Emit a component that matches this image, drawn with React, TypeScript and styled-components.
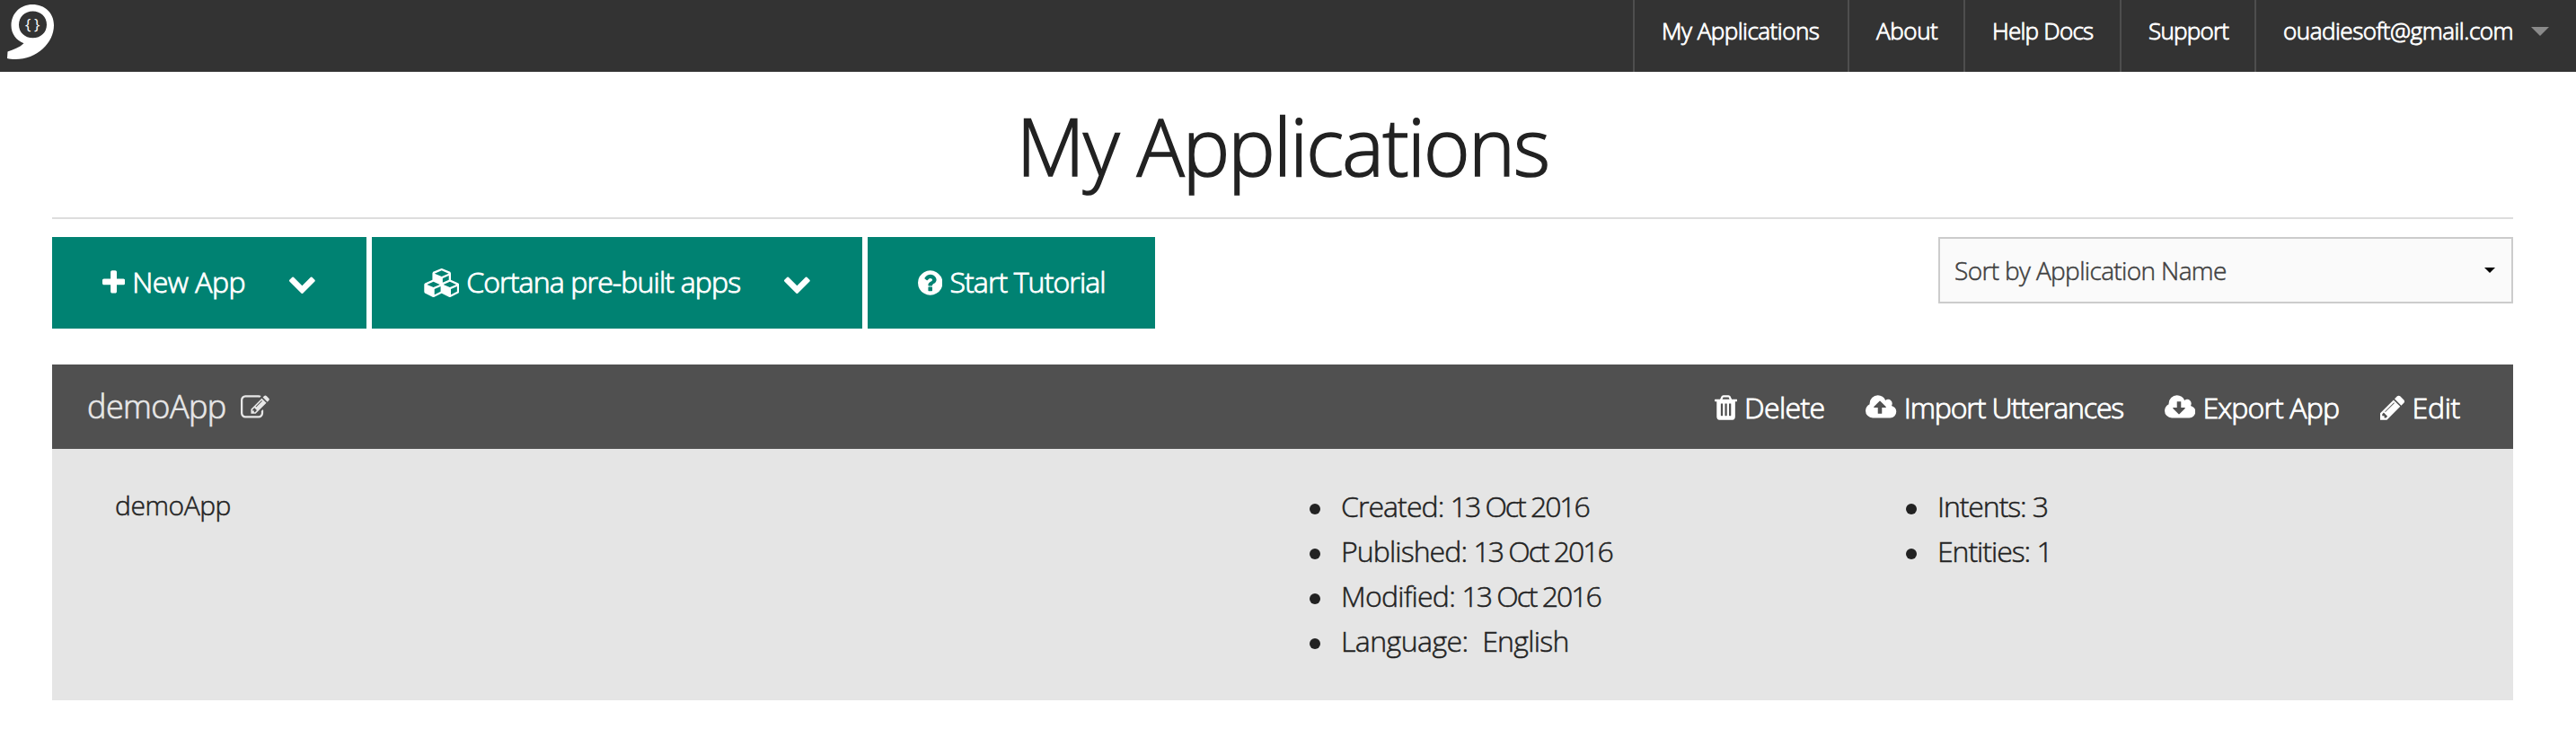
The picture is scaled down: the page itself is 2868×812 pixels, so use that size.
import React from 'react';
import styled, { createGlobalStyle } from 'styled-components';

const GlobalStyle = createGlobalStyle`
  * { box-sizing: border-box; }
  body { margin: 0; background: #fff; }
  body, button, select {
    font-family: 'Open Sans', 'Noto Sans', sans-serif;
    font-weight: 300;
    color: #222;
    -webkit-text-stroke: 0.5px currentColor;
  }
  h1, h2, p, ul { margin: 0; padding: 0; font-weight: 300; }
`;

/* ---------- icons ---------- */

const Glyph = styled.svg`
  display: block;
  flex: none;
  height: 32px;
  margin-top: 2px;
  fill: currentColor;
`;

const cloud =
  'zm640 288q0 159-112.5 271.5t-271.5 112.5h-1088q-185 0-316.5-131.5t-131.5-316.5q0-130 70-240t188-165q-2-30-2-43 0-212 150-362t362-150q156 0 285.5 87t188.5 231q71-62 166-62 106 0 181 75t75 181q0 76-41 138 130 31 213.5 135.5t83.5 238.5z';

const icons = {
  plus: {
    x: 192, w: 1408,
    d: 'M1600 736v192q0 40-28 68t-68 28h-416v416q0 40-28 68t-68 28h-192q-40 0-68-28t-28-68v-416h-416q-40 0-68-28t-28-68v-192q0-40 28-68t68-28h416v-416q0-40 28-68t68-28h192q40 0 68 28t28 68v416h416q40 0 68 28t28 68z',
  },
  chevron: {
    x: 90, w: 1612,
    d: 'M1683 808l-742 741q-19 19-45 19t-45-19l-742-741q-19-19-19-45.500t19-45.500l166-165q19-19 45-19t45 19l531 531 531-531q19-19 45-19t45 19l166 165q19 19 19 45.500t-19 45.500z',
  },
  cubes: {
    x: -128, w: 2304,
    d: 'M640 1632l384-192v-314l-384 164v342zm-64-454l404-173-404-173-404 173zm1088 454l384-192v-314l-384 164v342zm-64-454l404-173-404-173-404 173zm-448-293l384-165v-266l-384 164v267zm-64-379l441-189-441-189-441 189zm1088 518v416q0 36-19 67t-52 47l-448 224q-25 14-57 14t-57-14l-448-224q-5-2-7-4-2 2-7 4l-448 224q-25 14-57 14t-57-14l-448-224q-33-16-52-47t-19-67v-416q0-38 21.500-70t56.500-48l434-186v-400q0-38 21.500-70t56.500-48l448-192q23-10 50-10t50 10l448 192q35 16 56.500 48t21.500 70v400l434 186q36 16 57 48t21 70z',
  },
  question: {
    x: 128, w: 1536,
    d: 'M1024 1376v-192q0-14-9-23t-23-9h-192q-14 0-23 9t-9 23v192q0 14 9 23t23 9h192q14 0 23-9t9-23zm256-672q0-88-55.500-163t-138.500-116-170-41q-243 0-371 213-15 24 8 42l132 100q7 6 19 6 16 0 25-12 53-68 86-92 34-24 86-24 48 0 85.500 26t37.500 59q0 38-20 61t-68 45q-63 28-115.500 86.500t-52.500 125.500v36q0 14 9 23t23 9h192q14 0 23-9t9-23q0-19 21.500-49.500t54.500-49.500q32-18 49-28.500t46-35 44.500-48 28-60.500 12.500-81zm384 192q0 209-103 385.500t-279.500 279.500-385.500 103-385.500-103-279.500-279.500-103-385.500 103-385.500 279.500-279.500 385.500-103 385.500 103 279.500 279.500 103 385.500z',
  },
  compose: {
    x: 0, w: 1792,
    d: 'M888 1184l116-116-152-152-116 116v56h96v96h56zm440-720q-16-16-33 1l-350 350q-17 17-1 33t33-1l350-350q17-17 1-33zm80 594v190q0 119-84.500 203.500t-203.500 84.500h-832q-119 0-203.500-84.500t-84.500-203.500v-832q0-119 84.500-203.500t203.500-84.500h832q63 0 117 25 15 7 18 23 3 17-9 29l-49 49q-14 14-32 8-23-6-45-6h-832q-66 0-113 47t-47 113v832q0 66 47 113t113 47h832q66 0 113-47t47-113v-126q0-13 9-22l64-64q15-15 35-7t20 29zm-96-738l288 288-672 672h-288v-288zm444 132l-92 92-288-288 92-92q28-28 68-28t68 28l152 152q28 28 28 68t-28 68z',
  },
  trash: {
    x: 192, w: 1408,
    d: 'M704 1376v-704q0-14-9-23t-23-9h-64q-14 0-23 9t-9 23v704q0 14 9 23t23 9h64q14 0 23-9t9-23zm256 0v-704q0-14-9-23t-23-9h-64q-14 0-23 9t-9 23v704q0 14 9 23t23 9h64q14 0 23-9t9-23zm256 0v-704q0-14-9-23t-23-9h-64q-14 0-23 9t-9 23v704q0 14 9 23t23 9h64q14 0 23-9t9-23zm-544-992h448l-48-117q-7-9-17-11h-317q-10 2-17 11zm928 32v64q0 14-9 23t-23 9h-96v948q0 83-47 143.500t-113 60.500h-832q-66 0-113-58.500t-47-141.500v-952h-96q-14 0-23-9t-9-23v-64q0-14 9-23t23-9h309l70-167q15-37 54-63t79-26h320q40 0 79 26t54 63l70 167h309q14 0 23 9t9 23z',
  },
  upload: {
    x: -64, w: 1920,
    d: 'M1216 864q0-14-9-23l-352-352q-9-9-23-9t-23 9l-351 351q-10 12-10 24 0 14 9 23t23 9h224v352q0 13 9.500 22.500t22.500 9.500h192q13 0 22.500-9.500t9.500-22.500v-352h224q13 0 22.500-9.500t9.500-22.500' + cloud,
  },
  download: {
    x: -64, w: 1920,
    d: 'M1216 928q0-14-9-23t-23-9h-224v-352q0-13-9.500-22.500t-22.500-9.500h-192q-13 0-22.500 9.500t-9.500 22.500v352h-224q-13 0-22.500 9.500t-9.500 22.500q0 14 9 23l352 352q9 9 23 9t23-9l351-351q10-12 10-24' + cloud.replace('zm640 288', 'zm640 224'),
  },
  pencil: {
    x: 128, w: 1536,
    d: 'M491 1536l91-91-235-235-91 91v107h128v128h107zm523-928q0-22-22-22-10 0-17 7l-542 542q-7 7-7 17 0 22 22 22 10 0 17-7l542-542q7-7 7-17zm-54-192l416 416-832 832h-416v-416zm683 96q0 53-37 90l-166 166-416-416 166-165q36-38 90-38 53 0 91 38l235 234q37 39 37 91z',
  },
};

type IconName = keyof typeof icons;

function Icon({ name }: { name: IconName }) {
  const { x, w, d } = icons[name];
  return (
    <Glyph viewBox={`${x} 0 ${w} 1792`} width={w / 56} aria-hidden="true">
      <path d={d} />
    </Glyph>
  );
}

/* ---------- top bar ---------- */

const TopBar = styled.header`
  display: flex;
  justify-content: space-between;
  height: 80px;
  background: #333;
`;

const Logo = styled.svg`
  display: block;
  width: 70px;
  height: 80px;
`;

const Brace = styled.text`
  font: 400 17px 'Open Sans', sans-serif;
  fill: #fff;
  -webkit-text-stroke: 0;
`;

const Nav = styled.nav`
  display: flex;
`;

const NavItem = styled.a<{ $width: number; $track: number }>`
  display: flex;
  width: ${(p) => p.$width}px;
  padding-left: 30px;
  border-left: 2px solid #4e4e4e;
  color: #fff;
  font-size: 26px;
  line-height: 69px;
  letter-spacing: ${(p) => p.$track}px;
  white-space: nowrap;
  -webkit-text-stroke-width: 0.9px;
`;

const Caret = styled.span<{ $size: number; $color: string }>`
  border: ${(p) => p.$size}px solid transparent;
  border-top-color: ${(p) => p.$color};
  border-bottom: 0;
`;

const NavCaret = styled(Caret)`
  align-self: flex-start;
  margin: 30px 0 0 20px;
`;

/* ---------- page ---------- */

const Page = styled.main`
  padding: 0 70px 0 58px;
`;

const Title = styled.h1`
  padding-top: 2px;
  border-bottom: 2px solid #ddd;
  font-size: 88px;
  line-height: 160px;
  letter-spacing: -1.75px;
  text-align: center;
  -webkit-text-stroke-width: 1.6px;
`;

const Toolbar = styled.div`
  display: flex;
  justify-content: space-between;
  align-items: flex-start;
  padding-top: 20px;
`;

const ButtonGroup = styled.div`
  display: flex;
  gap: 6px;
`;

const Label = styled.span<{ $track: number }>`
  letter-spacing: ${(p) => p.$track}px;
  white-space: pre;
`;

const Button = styled.button<{ $width: number }>`
  display: flex;
  align-items: center;
  gap: 8px;
  width: ${(p) => p.$width}px;
  height: 102px;
  padding: 0 0 3px 56px;
  border: 0;
  background: #008272;
  color: #fff;
  font-size: 32px;
  -webkit-text-stroke-width: 0.9px;
`;

const DropMark = styled.span`
  margin-left: 41px;
`;

const SortBox = styled.div`
  display: flex;
  justify-content: space-between;
  align-items: center;
  width: 640px;
  height: 74px;
  padding: 0 18px 0 16px;
  border: 2px solid #ccc;
  background: #fafafa;
  color: #404040;
  font-size: 28px;
  -webkit-text-stroke-width: 0.5px;
`;

/* ---------- application card ---------- */

const Card = styled.section`
  margin-top: 40px;
  background: #e5e5e5;
`;

const CardHeader = styled.div`
  display: flex;
  justify-content: space-between;
  align-items: center;
  height: 94px;
  padding: 0 59px 0 39px;
  background: #505050;
  color: #fff;
  font-size: 32px;
`;

const CardName = styled.h2`
  display: flex;
  align-items: center;
  gap: 16px;
  padding-bottom: 1px;
  color: #e7e7e7;
  font-size: 36px;
  -webkit-text-stroke-width: 0.7px;
`;

const Actions = styled.div`
  display: flex;
  gap: 46px;
  -webkit-text-stroke-width: 0.9px;
`;

const Action = styled.a`
  display: flex;
  align-items: center;
  gap: 8px;
`;

const CardBody = styled.div`
  display: grid;
  grid-template-columns: 1331px 664px 1fr;
  height: 280px;
  padding: 39px 0 0 70px;
  line-height: 50px;
`;

const Description = styled.p`
  margin-top: -1px;
  font-size: 30px;
`;

const Facts = styled.ul`
  margin-left: -1px;
  list-style: none;
  font-size: 32px;
`;

const Fact = styled.li`
  display: flex;
  align-items: center;

  &::before {
    content: '';
    width: 12px;
    height: 12px;
    margin: 5px 23px 0 0;
    border-radius: 50%;
    background: #222;
  }
`;

type FactItem = { name: string; value: string; track: number; valueTrack: number };

const actions: { icon: IconName; text: string; track: number }[] = [
  { icon: 'trash', text: 'Delete', track: -0.65 },
  { icon: 'upload', text: 'Import Utterances', track: -1.13 },
  { icon: 'download', text: 'Export App', track: -0.85 },
  { icon: 'pencil', text: 'Edit', track: -0.3 },
];

const history: FactItem[] = [
  { name: 'Created: ', value: '13 Oct 2016', track: -0.93, valueTrack: -2.05 },
  { name: 'Published: ', value: '13 Oct 2016', track: -0.9, valueTrack: -2.05 },
  { name: 'Modified: ', value: '13 Oct 2016', track: -0.75, valueTrack: -2.05 },
  { name: 'Language:  ', value: 'English', track: -0.55, valueTrack: -0.7 },
];

const counts: FactItem[] = [
  { name: 'Intents: ', value: '3', track: -1.1, valueTrack: 0 },
  { name: 'Entities: ', value: '1', track: -1.05, valueTrack: 0 },
];

function FactList({ items }: { items: FactItem[] }) {
  return (
    <Facts>
      {items.map((item) => (
        <Fact key={item.name}>
          <Label $track={item.track}>{item.name}</Label>
          <Label $track={item.valueTrack}>{item.value}</Label>
        </Fact>
      ))}
    </Facts>
  );
}

export default function App() {
  return (
    <>
      <GlobalStyle />
      <TopBar>
        <Logo viewBox="0 0 70 80">
          <path
            fill="#fff"
            fillRule="evenodd"
            d="M36 5C50 5 60 14.500 60 28C60 48 41 66 17 66C13.500 66 10.500 65.700 8 65L8.500 57.500C15 55.500 21.500 53 26.500 48.300C18 45 12.500 37.500 12.500 28.500C12.500 14.500 23 5 36 5ZM36.500 12.500C27.500 12.500 21 19 21 27.500C21 36 27.500 42.300 36.500 42.300C45.500 42.300 52 36 52 27.500C52 19 45.500 12.500 36.500 12.500Z"
          />
          <Brace x="28" y="33">{'{'}</Brace>
          <Brace x="38" y="33">{'}'}</Brace>
        </Logo>
        <Nav>
          <NavItem $width={239} $track={-0.5}>My Applications</NavItem>
          <NavItem $width={129} $track={-0.4}>About</NavItem>
          <NavItem $width={174} $track={-0.75}>Help Docs</NavItem>
          <NavItem $width={150} $track={-0.75}>Support</NavItem>
          <NavItem $width={358} $track={-0.48}>
            ouadiesoft@gmail.com
            <NavCaret $size={10} $color="#8a8a8a" />
          </NavItem>
        </Nav>
      </TopBar>
      <Page>
        <Title>My Applications</Title>
        <Toolbar>
          <ButtonGroup>
            <Button $width={350}>
              <Icon name="plus" />
              <Label $track={-0.5}>New App</Label>
              <DropMark><Icon name="chevron" /></DropMark>
            </Button>
            <Button $width={546}>
              <Icon name="cubes" />
              <Label $track={-0.84}>Cortana pre-built apps</Label>
              <DropMark><Icon name="chevron" /></DropMark>
            </Button>
            <Button $width={320}>
              <Icon name="question" />
              <Label $track={-0.88}>Start Tutorial</Label>
            </Button>
          </ButtonGroup>
          <SortBox>
            <Label $track={-0.64}>Sort by Application Name</Label>
            <Caret $size={6} $color="#000" />
          </SortBox>
        </Toolbar>
        <Card>
          <CardHeader>
            <CardName>
              <Label $track={-0.55}>demoApp</Label>
              <Icon name="compose" />
            </CardName>
            <Actions>
              {actions.map((a) => (
                <Action key={a.text}>
                  <Icon name={a.icon} />
                  <Label $track={a.track}>{a.text}</Label>
                </Action>
              ))}
            </Actions>
          </CardHeader>
          <CardBody>
            <Description><Label $track={-0.45}>demoApp</Label></Description>
            <FactList items={history} />
            <FactList items={counts} />
          </CardBody>
        </Card>
      </Page>
    </>
  );
}
